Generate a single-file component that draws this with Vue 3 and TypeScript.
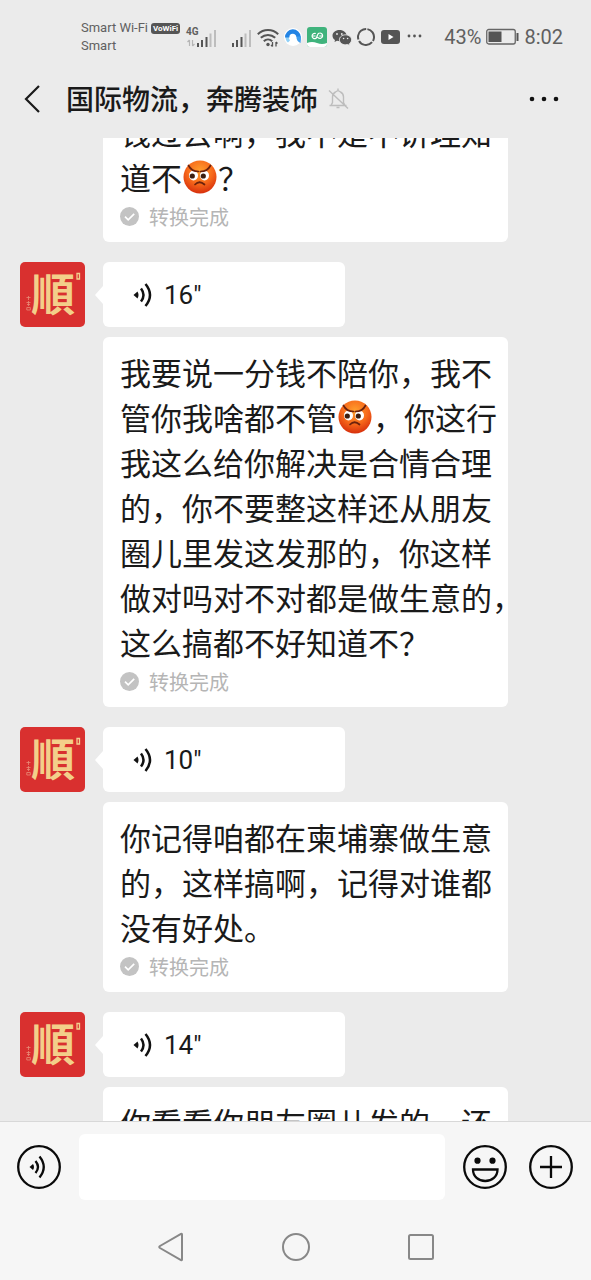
<script setup lang="ts">
import { onMounted, ref } from 'vue'

interface Message {
  seconds?: number
  lines: string[]
  done: boolean
}

const messages: Message[] = [
  { lines: ['钱过去啊，我不是不讲理知', '道不#？'], done: true },
  {
    seconds: 16,
    lines: [
      '我要说一分钱不陪你，我不',
      '管你我啥都不管#，你这行',
      '我这么给你解决是合情合理',
      '的，你不要整这样还从朋友',
      '圈儿里发这发那的，你这样',
      '做对吗对不对都是做生意的，',
      '这么搞都不好知道不？',
    ],
    done: true,
  },
  {
    seconds: 10,
    lines: ['你记得咱都在柬埔寨做生意', '的，这样搞啊，记得对谁都', '没有好处。'],
    done: true,
  },
  { seconds: 14, lines: ['你看看你朋友圈儿发的，还'], done: false },
]

const chat = ref<HTMLElement | null>(null)
const draft = ref('')

onMounted(() => {
  if (chat.value) chat.value.scrollTop = 41
})
</script>

<template>
  <div class="phone">
    <div class="status-bar">
      <div class="carrier">
        <div class="carrier-row">Smart Wi-Fi <span class="vowifi">VoWiFi</span></div>
        <div class="carrier-row">Smart</div>
      </div>
      <div class="indicators">
        <div class="network">
          <span class="gen">4G</span>
          <svg width="31" height="22" viewBox="0 0 31 22">
            <path d="M3.500 20v-6M1.500 16l2-2M6.500 14v6M8.500 18l-2 2" stroke="#b5b5b5" stroke-width="1.200" fill="none" />
            <path d="M11 17h2v4h-2zM15 14h2v7h-2zM19.500 11h2v10h-2z" fill="#555" />
            <path d="M23.500 7.500h2V21h-2zM28 4h2v17h-2z" fill="#bdbdbd" />
          </svg>
        </div>
        <svg class="second-sim" width="20" height="22" viewBox="0 0 20 22">
          <path d="M0 17h2v4H0zM4 14h2v7H4zM8.500 11h2v10h-2z" fill="#555" />
          <path d="M12.500 7.500h2V21h-2zM17 4h2v17h-2z" fill="#bdbdbd" />
        </svg>
        <svg width="22" height="22" viewBox="0 0 22 22" fill="none" stroke="#555" stroke-width="2">
          <path d="M.800 8.200c5.800-5.600 14.600-5.600 20.400 0M3.800 11.800c4.200-3.900 10.200-3.900 14.400 0M6.800 15.200c2.400-2.300 6-2.300 8.400 0" />
          <circle cx="11" cy="18.500" r="1.700" fill="#555" stroke="none" />
          <path d="M15.500 16v4.500M14 19l1.500 1.500M19 20.500V16M20.500 17.500L19 16" stroke-width="1.300" />
        </svg>
        <svg width="18" height="22" viewBox="0 0 18 22">
          <circle cx="9" cy="11" r="9" fill="#fff" />
          <path d="M5 15.500A5.600 5.600 0 0 1 3.300 10" fill="none" stroke="#8fd0f8" stroke-width="3" />
          <path d="M3.200 11.500A5.700 5.700 0 0 1 14.600 11" fill="none" stroke="#2384e4" stroke-width="4.400" />
          <path d="M12.400 10.500h4.600q0 4-.500 6.500-4-1.500-4.100-6.500z" fill="#3f9dee" />
        </svg>
        <svg width="20" height="22" viewBox="0 0 20 22">
          <rect y="1" width="20" height="20" rx="3" fill="#3fb37c" />
          <path d="M0 17q5-2 10 0t10 0v1q0 3-3 3H3q-3 0-3-3z" fill="#fff" />
          <path d="M8.800 7.500a2.700 2.700 0 1 0 0 5q1-1 1.700-3.500.600-2 2.300-2a2.700 2.700 0 1 1-2.300 4M5 10h3.500M15.300 10h-3" fill="none" stroke="#fff" stroke-width="1.200" />
        </svg>
        <svg width="20" height="22" viewBox="0 0 20 22">
          <path d="M7.500 4C3.400 4 .500 6.600.500 9.700c0 1.800 1 3.300 2.500 4.300L2.500 16l2.500-1.200 2.700.500c4-.100 6.900-2.700 6.900-5.700S11.500 4 7.500 4z" fill="#555" />
          <path d="M13.600 8.800c-3.500 0-6.200 2.200-6.200 5s2.700 5 6.200 5l2.100-.300 2.200 1.100-.500-1.900c1.400-.900 2.200-2.300 2.200-3.900 0-2.800-2.700-5-6-5z" fill="#555" stroke="#ebebeb" stroke-width=".900" />
          <g fill="#ebebeb"><circle cx="5" cy="8" r=".900" /><circle cx="9.800" cy="8" r=".900" /><circle cx="11.600" cy="12.500" r=".800" /><circle cx="15.600" cy="12.500" r=".800" /></g>
        </svg>
        <svg width="18" height="22" viewBox="0 0 18 22">
          <circle cx="9" cy="11" r="8" fill="none" stroke="#555" stroke-width="2" stroke-dasharray="15.200 1.550" transform="rotate(-80 9 11)" />
        </svg>
        <svg width="21" height="22" viewBox="0 0 21 22">
          <rect x="1" y="4" width="19" height="14" rx="3" fill="#555" />
          <path d="M8.500 8v6l5-3z" fill="#fff" />
        </svg>
        <svg width="18" height="22" viewBox="0 0 18 22" fill="#555">
          <circle cx="3" cy="10" r="1.400" /><circle cx="8.500" cy="10" r="1.400" /><circle cx="14" cy="10" r="1.400" />
        </svg>
      </div>
      <div class="power">
        <span>43%</span>
        <svg width="33" height="18" viewBox="0 0 33 18">
          <rect x=".750" y="1.500" width="28.500" height="14.500" rx="2" fill="none" stroke="#666" stroke-width="1.300" />
          <rect x="2.500" y="3.500" width="13" height="10.500" fill="#555" />
          <path d="M30.500 5h2v8h-2z" fill="#555" />
        </svg>
        <span>8:02</span>
      </div>
    </div>

    <header class="title-bar">
      <button class="plain back" type="button" aria-label="返回">
        <svg width="18" height="30" viewBox="0 0 18 30"><path d="M16 2L3 15l13 13" fill="none" stroke="#1a1a1a" stroke-width="2.200" /></svg>
      </button>
      <h1>国际物流，奔腾装饰</h1>
      <svg class="muted" width="22" height="24" viewBox="0 0 22 24" fill="none" stroke="#bdbdbd" stroke-width="1.400">
        <path d="M1.500 18.500h17M3 18.500l1.500-3V10q0-3.500 3-5l2.500-1.500L12.500 5q3 1.500 3 5v5.500l1.500 3M10 3.500V1.500M8.500 20.500h3M1 3.500L20 21.500" />
      </svg>
      <button class="plain more" type="button" aria-label="更多">
        <svg width="32" height="8" viewBox="0 0 32 8" fill="#111"><circle cx="4" cy="4" r="2.300" /><circle cx="16" cy="4" r="2.300" /><circle cx="28" cy="4" r="2.300" /></svg>
      </button>
    </header>

    <main ref="chat" class="chat">
      <section v-for="(message, index) in messages" :key="index" class="message">
        <div v-if="message.seconds" class="voice-row">
          <svg class="avatar" width="65" height="65" viewBox="0 0 65 65">
            <rect width="65" height="65" rx="5" fill="#d9302f" />
            <text x="33" y="49" text-anchor="middle" class="avatar-char">順</text>
            <path d="M57 11.500h2.500V17H57z" fill="none" stroke="#f3d08e" stroke-width="1.300" />
            <path d="M6.500 35.500h4M8.500 34v4M6.500 40.500h4M7 42.500h3M8.500 39v5M6.800 45.500h3.500v2.500H6.800z" fill="none" stroke="#e98b76" stroke-width=".800" />
          </svg>
          <button class="voice" type="button">
            <svg width="20" height="26" viewBox="0 0 20 26" fill="none" stroke="#111" stroke-width="2.500">
              <path d="M.500 13l4-3.500q2 3.500 0 7z" fill="#111" stroke="none" />
              <path d="M8 6.500q5 6.500 0 13M12.500 2q9 11 0 22" />
            </svg>
            <span>{{ message.seconds }}"</span>
          </button>
        </div>
        <article class="card">
          <p class="transcript">
            <span v-for="line in message.lines" :key="line" class="line">
              <template v-for="(part, i) in line.split('#')" :key="i">
                <svg v-if="i > 0" class="angry" width="34" height="34" viewBox="0 0 34 34">
                  <defs>
                    <radialGradient id="face" cx=".5" cy=".32" r=".7">
                      <stop offset="0" stop-color="#ffa02e" />
                      <stop offset=".55" stop-color="#f7691b" />
                      <stop offset="1" stop-color="#d52c0b" />
                    </radialGradient>
                  </defs>
                  <circle cx="17" cy="17" r="16.500" fill="url(#face)" />
                  <ellipse cx="10.500" cy="15.500" rx="4.500" ry="5" fill="#fff" />
                  <ellipse cx="21.500" cy="15.500" rx="4.500" ry="5" fill="#fff" />
                  <circle cx="9.300" cy="16" r="2.600" fill="#3b1e10" />
                  <circle cx="20.300" cy="16" r="2.600" fill="#3b1e10" />
                  <path d="M5.500 5.500q3 6 10 6M27.500 5.500q-3 6-10 6M12 24.500q4.500-4.500 9.500 0" fill="none" stroke="#6b210c" stroke-width="1.700" stroke-linecap="round" />
                </svg>{{ part }}</template>
            </span>
          </p>
          <div v-if="message.done" class="state">
            <svg width="19" height="19" viewBox="0 0 19 19">
              <circle cx="9.500" cy="9.500" r="9.500" fill="#c3c3c3" />
              <path d="M5 9.700l3.200 3.200 6-6" fill="none" stroke="#fff" stroke-width="1.700" />
            </svg>
            <span>转换完成</span>
          </div>
        </article>
      </section>
    </main>

    <form class="composer" @submit.prevent>
      <button class="plain" type="button" aria-label="语音">
        <svg width="44" height="44" viewBox="0 0 44 44" fill="none" stroke="#0a0a0a" stroke-width="2.300">
          <circle cx="22" cy="22" r="20.800" />
          <path d="M12.500 22l3.500-3q2 3 0 6z" fill="#0a0a0a" stroke="none" />
          <path d="M18.500 16q5 6 0 12M22.500 11.500q8.500 10.500 0 21" />
        </svg>
      </button>
      <input v-model="draft" type="text" aria-label="消息" />
      <div class="actions">
        <button class="plain" type="button" aria-label="表情">
          <svg width="44" height="44" viewBox="0 0 44 44" fill="none" stroke="#0a0a0a" stroke-width="2.300">
            <circle cx="22" cy="22" r="20.800" />
            <g fill="#0a0a0a" stroke="none"><circle cx="14.500" cy="15.700" r="3.100" /><circle cx="29.500" cy="15.700" r="3.100" /></g>
            <path d="M10 24.500h24.500c0 7-5.500 11.500-12.250 11.500S10 31.500 10 24.500z" />
          </svg>
        </button>
        <button class="plain" type="button" aria-label="添加">
          <svg width="44" height="44" viewBox="0 0 44 44" fill="none" stroke="#0a0a0a" stroke-width="2.300">
            <circle cx="22" cy="22" r="20.800" />
            <path d="M22 11v22M11 22h22" />
          </svg>
        </button>
      </div>
    </form>

    <nav class="system-nav">
      <button class="plain" type="button" aria-label="后退">
        <svg width="32" height="32" viewBox="0 0 32 32"><path d="M27 3.500v25q0 1-1 .500L5 17q-1.500-1 0-2L26 3q1-.500 1 .500z" fill="none" stroke="#888" stroke-width="2" /></svg>
      </button>
      <button class="plain" type="button" aria-label="主屏幕">
        <svg width="32" height="32" viewBox="0 0 32 32"><circle cx="16" cy="16" r="13" fill="none" stroke="#888" stroke-width="2" /></svg>
      </button>
      <button class="plain" type="button" aria-label="最近任务">
        <svg width="32" height="32" viewBox="0 0 32 32"><rect x="4" y="4" width="24" height="24" rx="1.500" fill="none" stroke="#888" stroke-width="2" /></svg>
      </button>
    </nav>
  </div>
</template>

<style>
body {
  margin: 0;
  background: #ebebeb;
}
</style>

<style scoped>
.phone {
  display: flex;
  flex-direction: column;
  height: 100vh;
  background: #ebebeb;
  color: #1a1a1a;
  font-family: "Noto Sans CJK SC", sans-serif;
}
svg {
  display: block;
  flex: none;
}
.plain {
  display: block;
  padding: 0;
  border: 0;
  background: none;
}
.status-bar {
  display: flex;
  align-items: center;
  flex: none;
  height: 74px;
  padding: 0 28px 0 81px;
  color: #606060;
  font-family: Roboto, sans-serif;
}
.carrier {
  width: 105px;
  font-size: 13px;
  line-height: 18px;
}
.carrier-row {
  display: flex;
  align-items: center;
  gap: 3px;
  white-space: nowrap;
}
.vowifi {
  padding: 0 2px;
  border-radius: 3px;
  background: #555;
  color: #fff;
  font-size: 8px;
  font-weight: 700;
  line-height: 11px;
}
.indicators {
  display: flex;
  align-items: center;
  gap: 5px;
}
.network {
  position: relative;
}
.gen {
  position: absolute;
  top: 0;
  left: 0;
  font-size: 10px;
  font-weight: 700;
  line-height: 12px;
}
.second-sim {
  margin-left: 10px;
}
.power {
  display: flex;
  align-items: center;
  gap: 5px;
  margin-left: auto;
  font-size: 20px;
  line-height: 24px;
}
.title-bar {
  display: flex;
  align-items: center;
  flex: none;
  height: 64px;
  padding: 0 31px 14px 23px;
  box-sizing: border-box;
}
.title-bar h1 {
  margin: 0 10px 0 25px;
  padding-bottom: 2px;
  font-size: 28px;
  font-weight: 500;
  line-height: 36px;
}
.more {
  margin-left: auto;
}
.chat {
  flex: 1;
  min-height: 0;
  overflow: hidden;
}
.message {
  margin-bottom: 20px;
}
.voice-row {
  display: flex;
  gap: 18px;
  margin: 0 20px 10px;
}
.avatar-char {
  fill: #f3cf8a;
  font-family: "Noto Sans CJK TC", sans-serif;
  font-size: 44px;
  font-weight: 700;
}
.voice {
  position: relative;
  display: flex;
  align-items: center;
  gap: 11px;
  width: 242px;
  height: 65px;
  padding: 0 30px;
  border: 0;
  border-radius: 6px;
  background: #fff;
  color: #1a1a1a;
  font-family: Roboto, sans-serif;
  font-size: 26px;
}
.voice::before {
  content: "";
  position: absolute;
  top: 24px;
  left: -8px;
  border: solid transparent;
  border-width: 9px 8px 9px 0;
  border-right-color: #fff;
}
.card {
  margin: 0 83px 0 103px;
  padding: 12px 17px 14px;
  border-radius: 6px;
  background: #fff;
}
.transcript {
  margin: 0;
  font-size: 31px;
  line-height: 45px;
}
.line {
  display: flex;
  align-items: center;
  height: 45px;
  white-space: nowrap;
}
.angry {
  margin: 0 1px;
}
.state {
  display: flex;
  align-items: center;
  gap: 10px;
  height: 24px;
  margin-top: 5px;
  color: #b5b5b5;
  font-size: 20px;
}
.composer {
  display: flex;
  align-items: center;
  flex: none;
  gap: 18px;
  padding: 12px 18px 14px 17px;
  border-top: 1px solid #d8d8d8;
  background: #f6f6f6;
}
.composer input {
  flex: 1;
  min-width: 0;
  height: 66px;
  padding: 0 12px;
  box-sizing: border-box;
  border: 0;
  border-radius: 6px;
  background: #fff;
  font: inherit;
  font-size: 28px;
}
.actions {
  display: flex;
  gap: 22px;
}
.system-nav {
  display: flex;
  align-items: center;
  justify-content: center;
  flex: none;
  gap: 93px;
  height: 66px;
  background: #f6f6f6;
}
</style>
